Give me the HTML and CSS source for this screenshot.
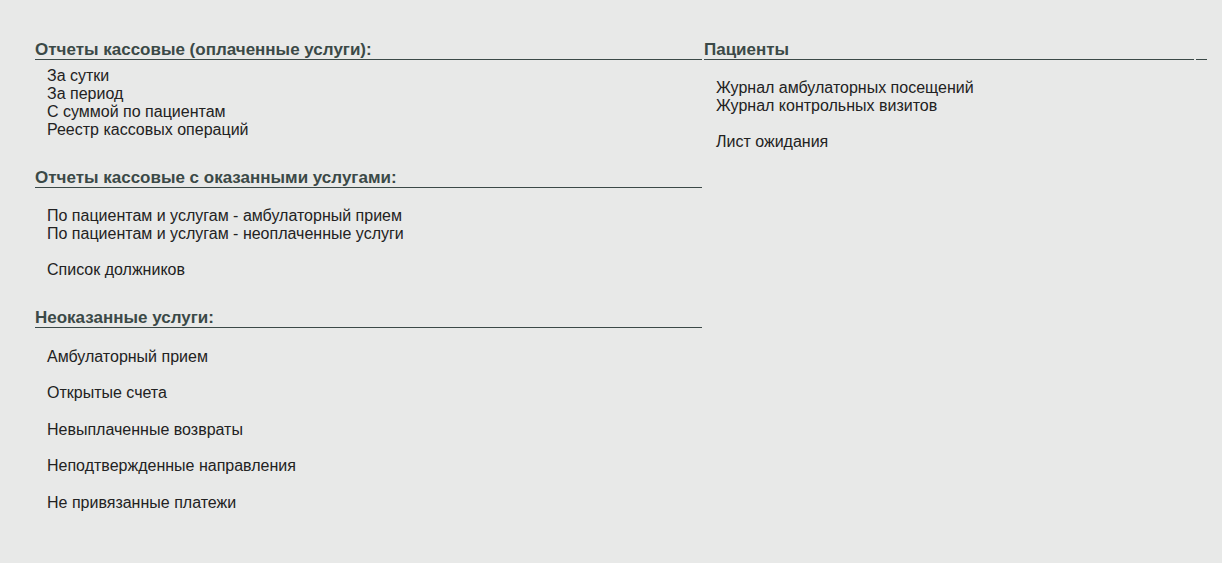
FILE: index.html
```html
<!DOCTYPE html>
<html lang="ru">
<head>
  <meta charset="UTF-8">
  <meta name="viewport" content="width=device-width, initial-scale=1.0">
  <title>Отчеты</title>
  <link rel="stylesheet" href="styles.css">
</head>
<body>
  <div class="reports">
    <div class="col col-left">
      <div class="section">
        <div class="section-title">Отчеты кассовые (оплаченные услуги):</div>
        <div class="links links-tight">
          <a href="#">За сутки</a>
          <a href="#">За период</a>
          <a href="#">С суммой по пациентам</a>
          <a href="#">Реестр кассовых операций</a>
        </div>
      </div>

      <div class="section">
        <div class="section-title">Отчеты кассовые с оказанными услугами:</div>
        <div class="links links-wide">
          <a href="#">По пациентам и услугам - амбулаторный прием</a>
          <a href="#">По пациентам и услугам - неоплаченные услуги</a>
          <a href="#" class="spaced">Список должников</a>
        </div>
      </div>

      <div class="section">
        <div class="section-title">Неоказанные услуги:</div>
        <div class="links links-list">
          <a href="#">Амбулаторный прием</a>
          <a href="#">Открытые счета</a>
          <a href="#">Невыплаченные возвраты</a>
          <a href="#">Неподтвержденные направления</a>
          <a href="#">Не привязанные платежи</a>
        </div>
      </div>
    </div>

    <div class="col col-right">
      <div class="section">
        <div class="section-title">Пациенты</div>
        <div class="links">
          <a href="#">Журнал амбулаторных посещений</a>
          <a href="#">Журнал контрольных визитов</a>
          <a href="#" class="spaced">Лист ожидания</a>
        </div>
      </div>
    </div>

    <div class="col col-tail">
      <div class="section-title">&nbsp;</div>
    </div>
  </div>
</body>
</html>
```

FILE: styles.css
```css
* {
  box-sizing: border-box;
}

body {
  margin: 0;
  background: #e8e9e8;
  font-family: 'Liberation Sans', Arial, sans-serif;
  font-size: 16px;
  color: #222;
}

.reports {
  display: flex;
  gap: 2px;
  padding: 40px 0 0 35px;
}

.col-left {
  width: 667px;
}

.col-right {
  width: 490px;
}

.col-tail {
  width: 11px;
}

.section + .section {
  margin-top: 29px;
}

.section-title {
  font-size: 17px;
  font-weight: bold;
  line-height: 19px;
  color: #3b4947;
  border-bottom: 1px solid #3b4947;
}

.links {
  display: flex;
  flex-direction: column;
  padding: 18.5px 0 0 12px;
  line-height: 18px;
}

.links a {
  color: #222;
  text-decoration: none;
}

.links a:hover {
  text-decoration: underline;
}

.links .spaced {
  margin-top: 18px;
}

.links-tight {
  padding-top: 6.5px;
}

.links-wide {
  padding-top: 19.5px;
}

.links-list {
  padding-top: 19.5px;
  gap: 18.5px;
}
```
